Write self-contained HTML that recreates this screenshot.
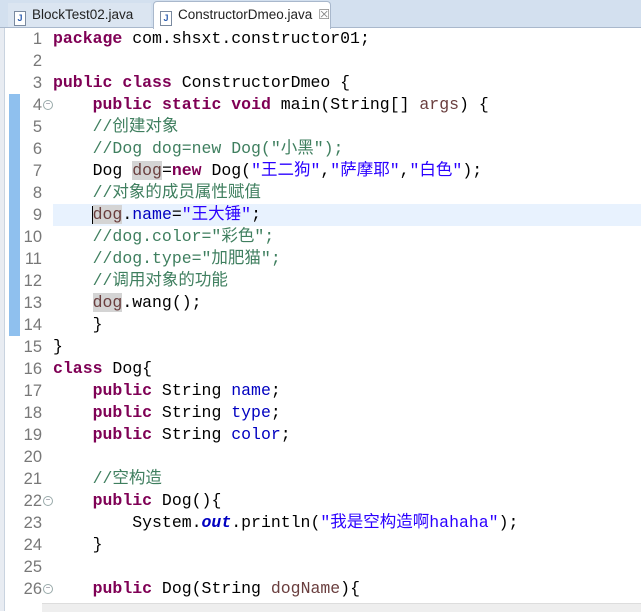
<!DOCTYPE html>
<html><head><meta charset="utf-8"><style>
body{margin:0;width:641px;height:611px;overflow:hidden;background:#fff;position:relative;font-family:"Liberation Mono","Noto Sans CJK SC",monospace;}
#tabs{position:absolute;left:0;top:0;width:641px;height:27px;background:#d3e0ef;border-bottom:1px solid #a9b8cc;}
.tab{position:absolute;top:3px;height:24px;font:13.5px "Liberation Sans",sans-serif;line-height:24px;color:#222;white-space:nowrap;overflow:hidden}
#t1{left:8px;width:143px;background:#dbe5f1;}
#t2{left:153px;width:176px;top:1px;height:27px;background:#fff;border:1px solid #a9b8cc;border-bottom:none;border-radius:4px 4px 0 0;line-height:26px;}
.ic{display:inline-block;width:10px;height:13px;border:1px solid #7a8aa0;background:#fff;vertical-align:-2px;margin:0 6px 0 6px;font:bold 9px "Liberation Sans";color:#3060b0;text-align:center;line-height:13px}
#frame{position:absolute;left:0;top:28px;width:4px;height:583px;background:#e8ecf2;border-right:1px solid #c9d3df}
#ov{position:absolute;left:9px;top:94px;width:11px;height:242px;background:#8fc0ee;}
.ln{position:absolute;left:0;width:42px;text-align:right;color:#787878;font-size:16.5px;line-height:22px;font-family:"Liberation Sans",sans-serif;}
.code{position:absolute;left:53px;white-space:pre;font-size:16.5px;line-height:22px;color:#000;}
.k{color:#7f0055;font-weight:bold}.c{color:#3f7f5f}.s{color:#2a00ff}.f{color:#0000c0}.p{color:#6a3e3e}
.o{background:#d4d4d4}
.fold{position:absolute;left:43px;width:8px;height:8px;border:1px solid #9aa;border-radius:50%;font-size:8px;line-height:8px;text-align:center;color:#778;}
#hl{position:absolute;left:53px;top:204px;width:588px;height:22px;background:#e8f2fe}
#sb{position:absolute;left:42px;top:603px;width:599px;height:8px;background:#eee;border-top:1px solid #ddd}
</style></head><body>
<div id="tabs"><div class="tab" id="t1"><span class="ic">J</span>BlockTest02.java</div><div class="tab" id="t2"><span class="ic">J</span>ConstructorDmeo.java <span style="color:#888;margin-left:2px">☒</span></div></div>
<div id="frame"></div><div id="ov"></div>
<div id="hl"></div>
<div style="position:absolute;left:92px;top:206px;width:2px;height:18px;background:#000"></div>
<div class="ln" style="top:28px">1<br>2<br>3<br>4<br>5<br>6<br>7<br>8<br>9<br>10<br>11<br>12<br>13<br>14<br>15<br>16<br>17<br>18<br>19<br>20<br>21<br>22<br>23<br>24<br>25<br>26</div>
<div class="fold" style="top:100px">−</div><div class="fold" style="top:496px">−</div><div class="fold" style="top:584px">−</div>
<div class="code" style="top:28px"><span class="k">package</span> com.shsxt.constructor01;

<span class="k">public</span> <span class="k">class</span> ConstructorDmeo {
    <span class="k">public</span> <span class="k">static</span> <span class="k">void</span> main(String[] <span class="p">args</span>) {
    <span class="c">//创建对象</span>
    <span class="c">//Dog dog=new Dog("小黑");</span>
    Dog <span class="p o">dog</span>=<span class="k">new</span> Dog(<span class="s">"王二狗"</span>,<span class="s">"萨摩耶"</span>,<span class="s">"白色"</span>);
    <span class="c">//对象的成员属性赋值</span>
    <span class="p o">dog</span>.<span class="f">name</span>=<span class="s">"王大锤"</span>;
    <span class="c">//dog.color="彩色";</span>
    <span class="c">//dog.type="加肥猫";</span>
    <span class="c">//调用对象的功能</span>
    <span class="p o">dog</span>.wang();
    }
}
<span class="k">class</span> Dog{
    <span class="k">public</span> String <span class="f">name</span>;
    <span class="k">public</span> String <span class="f">type</span>;
    <span class="k">public</span> String <span class="f">color</span>;

    <span class="c">//空构造</span>
    <span class="k">public</span> Dog(){
        System.<span class="f" style="font-weight:bold;font-style:italic">out</span>.println(<span class="s">"我是空构造啊hahaha"</span>);
    }

    <span class="k">public</span> Dog(String <span class="p">dogName</span>){</div>
<div id="sb"></div>
</body></html>
